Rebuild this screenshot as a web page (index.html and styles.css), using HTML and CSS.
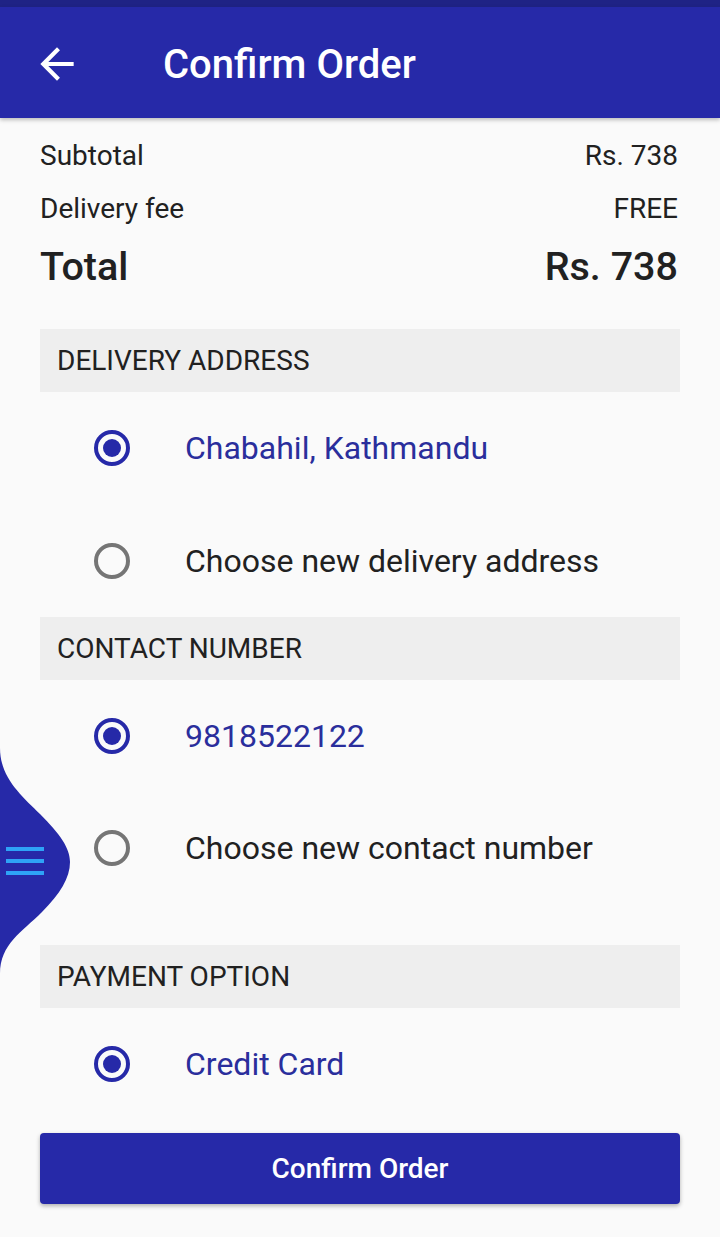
FILE: index.html
```html
<!DOCTYPE html>
<html>
<head>
<meta charset="utf-8">
<link rel="stylesheet" href="styles.css">
</head>
<body>
<div class="statusbar"></div>
<header class="appbar">
  <svg class="back" width="50" height="50" viewBox="0 0 24 24"><path d="M20 11H7.83l5.59-5.59L12 4l-8 8 8 8 1.41-1.41L7.83 13H20v-2z" fill="#fff"/></svg>
  <h1 class="title">Confirm Order</h1>
</header>
<main class="content">
  <div class="line"><span>Subtotal</span><span>Rs. 738</span></div>
  <div class="line second"><span>Delivery fee</span><span>FREE</span></div>
  <div class="line total"><span>Total</span><span>Rs. 738</span></div>

  <div class="section">DELIVERY ADDRESS</div>
  <div class="option selected"><span class="radio"></span><span class="label">Chabahil, Kathmandu</span></div>
  <div class="option"><span class="radio"></span><span class="label">Choose new delivery address</span></div>

  <div class="section">CONTACT NUMBER</div>
  <div class="option selected"><span class="radio"></span><span class="label">9818522122</span></div>
  <div class="option"><span class="radio"></span><span class="label">Choose new contact number</span></div>

  <div class="section gap">PAYMENT OPTION</div>
  <div class="option selected"><span class="radio"></span><span class="label">Credit Card</span></div>

  <button class="confirm">Confirm Order</button>
</main>
<div class="drawer-tab">
  <svg width="72" height="230" viewBox="0 0 72 230"><path d="M0 0 C0 30 22 48 40 66 C60 86 70 100 70 114 C70 130 60 146 42 164 C22 184 0 196 0 226 Z" fill="#2629a8"/></svg>
  <span class="burger"><i></i><i></i><i></i></span>
</div>
</body>
</html>
```
FILE: styles.css
```css
html, body { margin: 0; padding: 0; }
body {
  background: #fafafa;
  font-family: Roboto, "Noto Sans", sans-serif;
  color: #212121;
  width: 720px;
  height: 1237px;
  position: relative;
  overflow: hidden;
}
.statusbar { height: 7px; background: #1f2385; }
.appbar {
  height: 111px;
  box-sizing: border-box;
  padding-top: 3px;
  background: #2629a8;
  display: flex;
  align-items: center;
  padding-left: 32px;
  box-shadow: 0 2px 4px rgba(0,0,0,0.25);
  position: relative;
  z-index: 1;
}
.back { display: block; }
.title {
  margin: 0 0 0 81px;
  color: #fff;
  font-size: 40px;
  font-weight: 500;
}
.content { padding: 12px 40px 0; }
.line {
  display: flex;
  justify-content: space-between;
  height: 52px;
  line-height: 52px;
  font-size: 28px;
  padding-right: 2px;
}
.line.second { height: 53px; line-height: 53px; }
.line.total {
  height: 64px;
  line-height: 64px;
  font-size: 39.5px;
  font-weight: 500;
  margin-bottom: 30px;
}
.section {
  height: 63px;
  line-height: 63px;
  background: #eeeeee;
  padding-left: 17px;
  font-size: 28px;
}
.section.gap { margin-top: 41px; }
.option {
  height: 112px;
  display: flex;
  align-items: center;
  padding-left: 54px;
  font-size: 32px;
}
.option:nth-child(6) { height: 113px; }
.radio {
  width: 36px;
  height: 36px;
  box-sizing: border-box;
  border: 4px solid #757575;
  border-radius: 50%;
  margin-right: 55px;
  position: relative;
  flex: none;
}
.option.selected .radio { border-color: #2629a8; }
.option.selected .radio::after {
  content: "";
  position: absolute;
  left: 5px; top: 5px;
  width: 18px; height: 18px;
  border-radius: 50%;
  background: #2629a8;
}
.option.selected .label { color: #2a2e9c; }
.confirm {
  display: block;
  width: 100%;
  height: 71px;
  margin-top: 13px;
  border: none;
  border-radius: 4px;
  background: #2629a8;
  color: #fff;
  font-family: Roboto, sans-serif;
  font-size: 28px;
  font-weight: 500;
  box-shadow: 0 2px 4px rgba(0,0,0,0.3);
}
.drawer-tab {
  position: absolute;
  left: 0;
  top: 748px;
  width: 72px;
  height: 230px;
}
.drawer-tab svg { display: block; }
.burger {
  position: absolute;
  left: 6px;
  top: 99px;
  width: 38px;
  display: flex;
  flex-direction: column;
  gap: 8px;
}
.burger i { display: block; height: 4px; background: #2ea3f7; }
```
